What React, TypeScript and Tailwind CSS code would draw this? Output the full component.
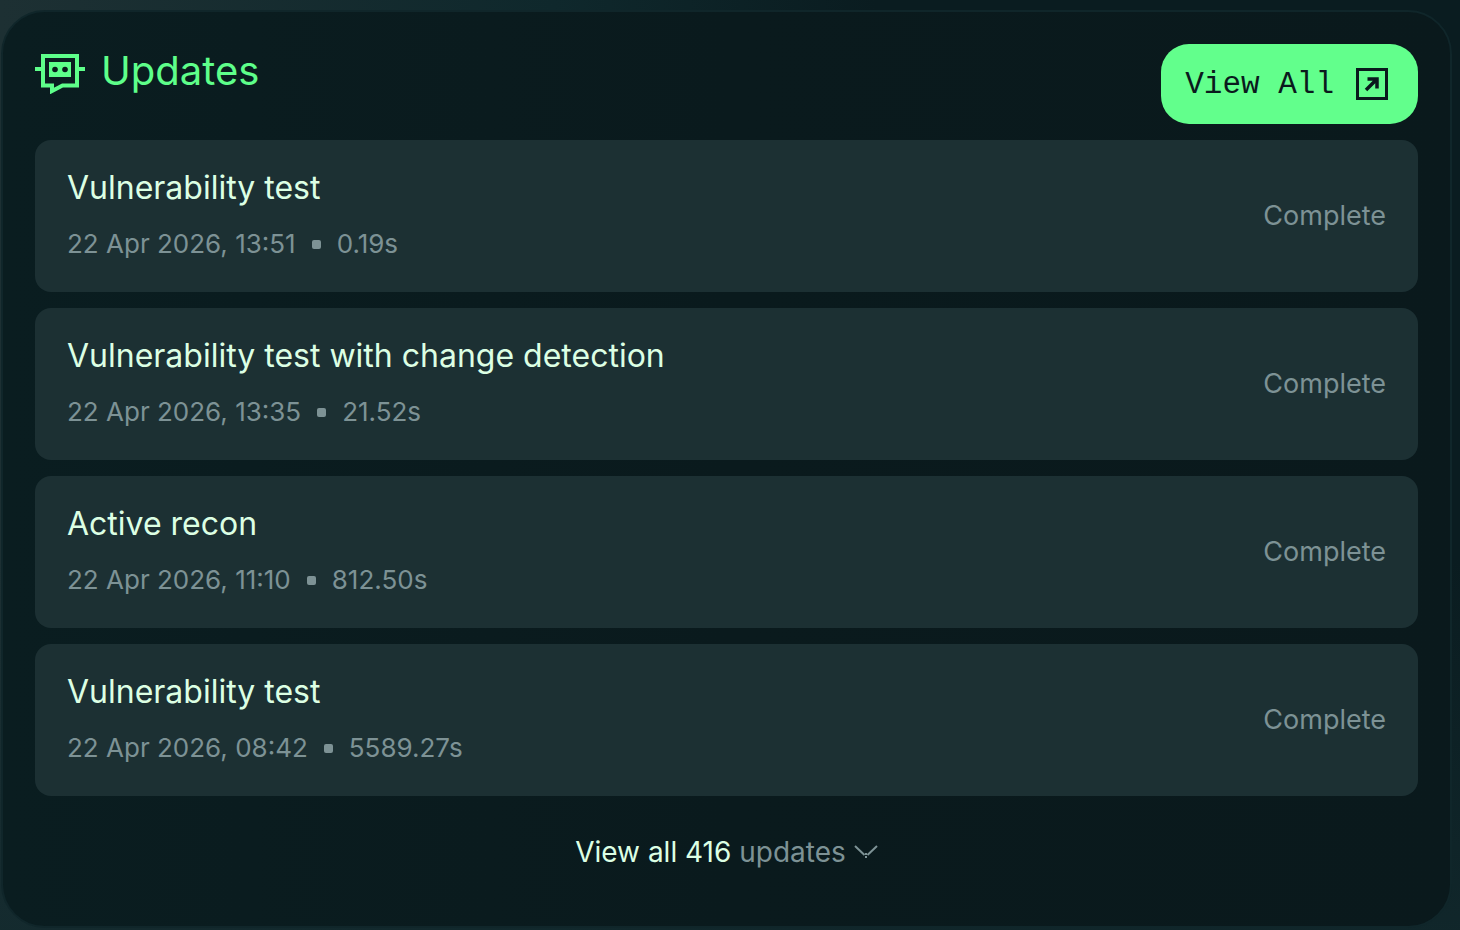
interface Update {
  title: string;
  date: string;
  duration: string;
  status: string;
}

const updates: Update[] = [
  { title: 'Vulnerability test', date: '22 Apr 2026, 13:51', duration: '0.19s', status: 'Complete' },
  {
    title: 'Vulnerability test with change detection',
    date: '22 Apr 2026, 13:35',
    duration: '21.52s',
    status: 'Complete',
  },
  { title: 'Active recon', date: '22 Apr 2026, 11:10', duration: '812.50s', status: 'Complete' },
  { title: 'Vulnerability test', date: '22 Apr 2026, 08:42', duration: '5589.27s', status: 'Complete' },
];

function BotIcon() {
  return (
    <svg width="50" height="42" viewBox="0 0 50 42" fill="none" aria-hidden="true">
      <path d="M8 4H42V33.5H27.5L17 39V33.5H8Z" stroke="#5eff8a" strokeWidth="4" />
      <path d="M0 15H6V19H0ZM44 15H50V19H44Z" fill="#5eff8a" />
      <path d="M14 10H36V25H14Z" fill="#5eff8a" />
      <circle cx="20" cy="17.5" r="2.8" fill="#0a1a1d" />
      <circle cx="30" cy="17.5" r="2.8" fill="#0a1a1d" />
    </svg>
  );
}

function OpenIcon() {
  return (
    <svg width="32" height="32" viewBox="0 0 32 32" fill="none" aria-hidden="true">
      <path d="M1.5 1.5H30.5V30.5H1.5Z" stroke="#0a1a1d" strokeWidth="3" />
      <path d="M10 22L21 11M11.5 11H21V20.5" stroke="#0a1a1d" strokeWidth="3.5" />
    </svg>
  );
}

function ChevronIcon() {
  return (
    <svg width="24" height="14" viewBox="0 0 24 14" fill="none" aria-hidden="true">
      <path d="M1 1L10.5 10M23 1L13.5 10" stroke="#7d9295" strokeWidth="2" />
      <path d="M11 8H13V10H11ZM11 11H13V13H11Z" fill="#7d9295" />
    </svg>
  );
}

function UpdateCard({ title, date, duration, status }: Update) {
  return (
    <li className="flex items-center justify-between rounded-2xl bg-[#1c3033] px-8 py-6">
      <div>
        <h3 className="text-[32px] leading-[48px] text-[#dcffe4]">{title}</h3>
        <p className="mt-2 flex items-center text-[26px] leading-[48px] text-[#7d9295]">
          {date}
          <span className="mx-4 size-[9px] rounded-xs bg-[#7d9295]" />
          {duration}
        </p>
      </div>
      <span className="text-[27px] leading-[48px] text-[#7d9295]">{status}</span>
    </li>
  );
}

export default function App() {
  return (
    <main className="min-h-screen bg-[linear-gradient(to_bottom,transparent_60%,#12292dcc),linear-gradient(to_right,#1d3033,#0f282c_38%,#0a1c20_60%,#0a1c20)] pt-[10px] pr-2 pb-1 pl-px font-['Inter',sans-serif]">
      <section className="rounded-[44px] border-2 border-[#10262a] bg-linear-to-r from-[#0a1d20] via-[#0a1a1d] to-[#0a191c] px-8 pt-8 pb-[50px]">
        <header className="flex items-start justify-between">
          <div className="flex items-center gap-4 text-[#5eff8a]">
            <BotIcon />
            <h2 className="pb-1 text-[40px] leading-[54px]">Updates</h2>
          </div>
          <button
            type="button"
            className="flex h-20 items-center gap-[22px] rounded-[28px] bg-[#62ff8c] pr-[30px] pl-6 font-['Liberation_Mono',monospace] text-[31px] text-[#0a1a1d]"
          >
            <span className="pt-[3px]">View All</span>
            <OpenIcon />
          </button>
        </header>

        <ul className="mt-4 flex flex-col gap-4">
          {updates.map((update) => (
            <UpdateCard key={update.date} {...update} />
          ))}
        </ul>

        <button
          type="button"
          className="mx-auto mt-8 flex items-center gap-2 text-[28px] leading-[48px] text-[#dcffe4]"
        >
          <span>
            View all 416 <span className="text-[#7d9295]">updates</span>
          </span>
          <ChevronIcon />
        </button>
      </section>
    </main>
  );
}
